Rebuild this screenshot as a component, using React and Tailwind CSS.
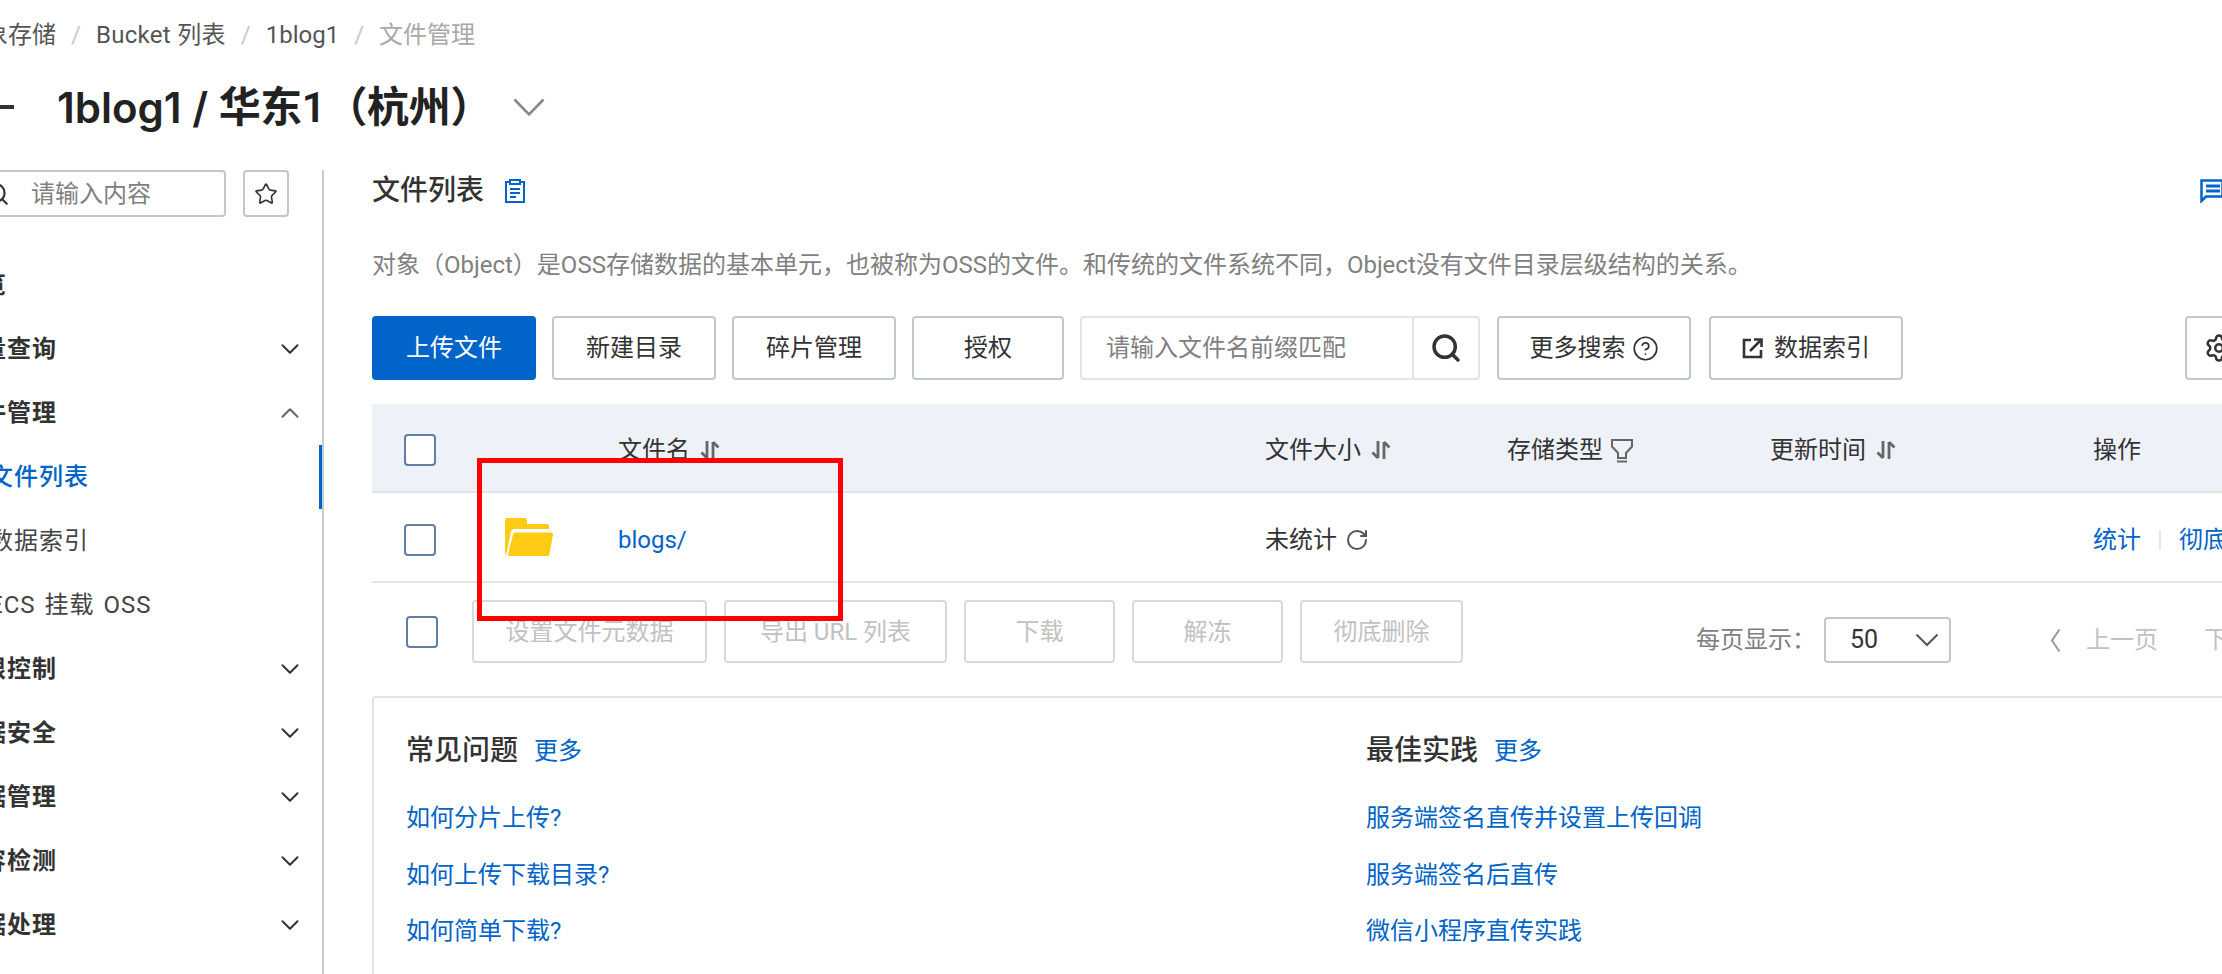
import React from "react";
import { ChevronDown, ChevronUp, Search, Star, CircleHelp, RotateCw, Settings } from "lucide-react";

const navAfter = ["权限控制", "数据安全", "数据管理", "内容检测", "数据处理"];

function SortIcon() {
  return (
    <svg width="20" height="20" viewBox="0 0 20 20" fill="none" className="ml-[10px] shrink-0">
      <path d="M7 1v17M7 18L1.5 12.5" stroke="#666" strokeWidth="2.8" />
      <path d="M13 19V2M13 2l5.5 5.5" stroke="#666" strokeWidth="2.8" />
    </svg>
  );
}

function FilterIcon() {
  return (
    <svg width="22" height="25" viewBox="0 0 22 25" fill="none" className="ml-[8px] shrink-0">
      <path d="M1 2h20v6.5l-6 6.5v5H7v-5L1 8.5z" stroke="#666" strokeWidth="2" />
      <path d="M6 23.5h10" stroke="#666" strokeWidth="2" />
    </svg>
  );
}

function Checkbox() {
  return <div className="w-8 h-8 rounded-[4px] border-2 border-[#5f7fa3] bg-white shrink-0" />;
}

function Btn({ w, children }) {
  return (
    <div className={`${w} h-16 shrink-0 flex items-center justify-center rounded-[4px] border-2 border-[#c0c6d2] bg-white text-[24px] text-[#333]`}>
      {children}
    </div>
  );
}

function GhostBtn({ w, children }) {
  return (
    <div className={`${w} h-[63px] shrink-0 flex items-center justify-center rounded-[4px] border-2 border-[#d6d9de] text-[24px] text-[#c1c1c1]`}>
      {children}
    </div>
  );
}

function NavTop({ label, open, plain }) {
  return (
    <div className="h-16 flex items-center justify-between pr-[17px] text-[24px] font-semibold tracking-[1px] text-[#333]">
      <span>{label}</span>
      {plain ? null : open ? (
        <ChevronUp size={30} strokeWidth={1.6} className="text-[#666]" />
      ) : (
        <ChevronDown size={30} strokeWidth={1.6} className="text-[#333]" />
      )}
    </div>
  );
}

function NavSub({ label, active }) {
  return (
    <div className={`h-16 flex items-center pl-8 text-[24px] tracking-[1px] [word-spacing:2px] relative ${active ? "text-[#0064c8] font-medium" : "text-[#444]"}`}>
      {label}
      {active && <div className="absolute right-0 top-0 w-[3px] h-16 bg-[#0064c8]" />}
    </div>
  );
}

export default function App() {
  return (
    <div className="w-full h-[974px] overflow-hidden bg-white font-['Roboto','Noto_Sans_CJK_SC',sans-serif] text-[#333]">
      <div className="w-[2400px] -ml-[72px]">
        {/* Breadcrumb */}
        <div className="h-[70px] flex items-center text-[24px] text-[#555] pl-[32px]">
          <span>对象存储</span>
          <span className="mx-[15px] text-[#c9c9c9]">/</span>
          <span className="tracking-[0.3px]">Bucket 列表</span>
          <span className="mx-[15px] text-[#c9c9c9]">/</span>
          <span>1blog1</span>
          <span className="mx-[15px] text-[#c9c9c9]">/</span>
          <span className="text-[#a8a8a8]">文件管理</span>
        </div>

        {/* Title */}
        <div className="h-[100px] flex items-center pb-[26px]">
          <div className="w-[129px] flex justify-end pr-[43px] shrink-0">
            <div className="w-[16px] h-[4px] bg-[#333]" />
          </div>
          <span className="font-['Inter'] text-[42px] font-semibold text-[#222] whitespace-pre">1blog1 / </span>
          <span className="text-[42px] font-semibold text-[#222] tracking-[-0.4px]">华东1（杭州）</span>
          <svg width="32" height="19" viewBox="0 0 32 19" fill="none" className="ml-[21px]">
            <path d="M1.5 1.5L16 16.5 30.5 1.5" stroke="#888" strokeWidth="2.6" />
          </svg>
        </div>

        <div className="flex">
          {/* Sidebar */}
          <div className="w-[396px] shrink-0 h-[804px] border-r-2 border-r-[#c6cad3]">
            <div className="flex gap-[17px] pl-[32px] pr-[33px] h-[47px]">
              <div className="flex-1 border-2 border-[#c0c6d2] rounded-[4px] flex items-center pl-[22px] text-[24px] text-[#808080]">
                <Search size={26} strokeWidth={2} className="text-[#333] mr-[21px] shrink-0" />
                请输入内容
              </div>
              <div className="w-[46px] border-2 border-[#c0c6d2] rounded-[4px] flex items-center justify-center">
                <Star size={24} strokeWidth={1.6} className="text-[#333]" />
              </div>
            </div>
            <div className="mt-[36px] pl-[29px]">
              <NavTop label="概览" plain />
              <NavTop label="用量查询" />
              <NavTop label="文件管理" open />
              <NavSub label="文件列表" active />
              <NavSub label="数据索引" />
              <NavSub label="ECS 挂载 OSS" />
              {navAfter.map((label) => (
                <NavTop key={label} label={label} />
              ))}
            </div>
          </div>

          {/* Main */}
          <div className="w-[1960px] pl-[48px] shrink-0">
            <div className="h-[42px] flex items-center justify-between">
              <div className="flex items-center">
                <span className="text-[28px] font-medium text-[#333]">文件列表</span>
                <svg width="22" height="24" viewBox="0 0 22 24" fill="none" className="ml-[20px]">
                  <path d="M6 3H2v20h18V3h-4" stroke="#0064c8" strokeWidth="2" />
                  <rect x="6" y="1" width="10" height="4" stroke="#0064c8" strokeWidth="2" />
                  <path d="M6 10h10M6 14h10M6 18h6" stroke="#0064c8" strokeWidth="2" />
                </svg>
              </div>
              <svg width="24" height="24" viewBox="0 0 24 24" fill="none" className="mr-[60px]">
                <path d="M1.5 1.5h21v16H6L1.5 22z" stroke="#0064c8" strokeWidth="2.5" />
                <path d="M6 7h14M6 12h14" stroke="#0064c8" strokeWidth="3" />
              </svg>
            </div>

            <div className="mt-[33px] h-[40px] flex items-center text-[24px] text-[#808080] whitespace-nowrap">
              对象（Object）是OSS存储数据的基本单元，也被称为OSS的文件。和传统的文件系统不同，Object没有文件目录层级结构的关系。
            </div>

            {/* Toolbar */}
            <div className="mt-[31px] flex items-center">
              <div className="w-[164px] h-16 shrink-0 rounded-[4px] bg-[#0064c8] text-white text-[24px] flex items-center justify-center">上传文件</div>
              <div className="ml-4 flex gap-4">
                <Btn w="w-[164px]">新建目录</Btn>
                <Btn w="w-[164px]">碎片管理</Btn>
                <Btn w="w-[152px]">授权</Btn>
              </div>
              <div className="ml-4 w-[400px] h-16 shrink-0 rounded-[4px] border-2 border-[#e3e4e6] flex items-center">
                <span className="flex-1 pl-[24px] text-[24px] text-[#808080]">请输入文件名前缀匹配</span>
                <div className="w-[66px] h-full border-l-2 border-l-[#e3e4e6] flex items-center justify-center">
                  <Search size={32} strokeWidth={2.6} className="text-[#333]" />
                </div>
              </div>
              <div className="ml-[17px] flex gap-[18px]">
                <Btn w="w-[194px]">
                  更多搜索
                  <CircleHelp size={27} strokeWidth={1.5} className="ml-[6px]" />
                </Btn>
                <Btn w="w-[194px]">
                  <svg width="22" height="22" viewBox="0 0 22 22" fill="none" className="mr-[10px]">
                    <path d="M9 3H2v17h17v-7" stroke="#333" strokeWidth="2.6" />
                    <path d="M8 14l10-10M12 2.5h7.5V10" stroke="#333" strokeWidth="2.6" />
                  </svg>
                  数据索引
                </Btn>
              </div>
              <div className="ml-[282px] w-[120px] h-16 shrink-0 rounded-[4px] border-2 border-[#c0c6d2] flex items-center pl-[17px]">
                <Settings size={30} strokeWidth={2} className="text-[#333]" />
              </div>
            </div>

            {/* Table */}
            <div className="mt-6 grid grid-cols-[133px_113px_647px_242px_263px_323px_1fr] h-[89px] pt-[5px] items-center bg-[#eef1f8] border-b-2 border-b-[#e3e4e6] text-[24px] text-[#333]">
              <div className="pl-8"><Checkbox /></div>
              <div />
              <div className="flex items-center">文件名<SortIcon /></div>
              <div className="flex items-center">文件大小<SortIcon /></div>
              <div className="flex items-center">存储类型<FilterIcon /></div>
              <div className="flex items-center">更新时间<SortIcon /></div>
              <div>操作</div>
            </div>
            <div className="grid grid-cols-[133px_113px_647px_242px_263px_323px_1fr] h-[90px] pt-[6px] items-center border-b-2 border-b-[#e3e4e6] text-[24px]">
              <div className="pl-8"><Checkbox /></div>
              <div className="-mt-[6px]">
                <svg width="48" height="38" viewBox="0 0 48 38" fill="none" className="block">
                  <path d="M2 0h17a3 3 0 0 1 3 3v3h20a2 2 0 0 1 2 2v3H9a3 3 0 0 0-3 2.5L1 38 0 34V2a2 2 0 0 1 2-2z" fill="#fecb14" />
                  <path d="M10.5 14.5H46a2 2 0 0 1 2 2.3L44.5 36a2 2 0 0 1-2 2H4.5a1.5 1.5 0 0 1-1.5-1.5L8 16.5a3 3 0 0 1 2.5-2z" fill="#fecb14" />
                </svg>
              </div>
              <div className="text-[#0064c8]">blogs/</div>
              <div className="flex items-center">
                未统计
                <RotateCw size={24} strokeWidth={2} className="ml-[8px] text-[#555]" />
              </div>
              <div />
              <div />
              <div className="flex items-center text-[#0064c8]">
                统计
                <span className="mx-[18px] w-[2px] h-[20px] bg-[#e3e4e6]" />
                彻底删除
              </div>
            </div>

            {/* Table footer */}
            <div className="mt-[17px] flex items-start">
              <div className="h-[63px] flex items-center pl-[34px] w-[100px] shrink-0"><Checkbox /></div>
              <div className="flex gap-[17px]">
                <GhostBtn w="w-[235px]">设置文件元数据</GhostBtn>
                <GhostBtn w="w-[223px]">导出 URL 列表</GhostBtn>
                <GhostBtn w="w-[151px]">下载</GhostBtn>
                <GhostBtn w="w-[151px]">解冻</GhostBtn>
                <GhostBtn w="w-[163px]">彻底删除</GhostBtn>
              </div>
              <div className="ml-[233px] mt-[17px] h-[46px] flex items-center text-[24px] text-[#808080] shrink-0">
                <span className="w-[128px]">每页显示：</span>
                <div className="w-[127px] h-[46px] border-2 border-[#c0c6d2] rounded-[4px] flex items-center justify-between pl-[24px] pr-[10px] text-[#333]">
                  <span className="text-[25px]">50</span>
                  <svg width="24" height="14" viewBox="0 0 24 14" fill="none">
                    <path d="M1.5 1.5L12 12 22.5 1.5" stroke="#555" strokeWidth="2" />
                  </svg>
                </div>
                <svg width="11" height="25" viewBox="0 0 11 25" fill="none" className="ml-[99px]">
                  <path d="M9.5 1.5L2 12.5l7.5 11" stroke="#999" strokeWidth="2" />
                </svg>
                <span className="ml-[25px] text-[#c1c1c1]">上一页</span>
                <span className="ml-[46px] text-[#c1c1c1]">下一页</span>
              </div>
            </div>

            {/* Help card */}
            <div className="mt-[33px] h-[320px] border-2 border-[#e3e4e6] rounded-[4px] flex pl-[32px]">
              <div className="w-[960px] shrink-0">
                <div className="mt-[33px] h-[40px] flex items-center">
                  <span className="text-[28px] font-medium text-[#333]">常见问题</span>
                  <span className="ml-[16px] text-[24px] text-[#0064c8]">更多</span>
                </div>
                <div className="mt-[27px] flex flex-col gap-[16.5px] text-[24px] text-[#0064c8] leading-[40px]">
                  <span>如何分片上传?</span>
                  <span>如何上传下载目录?</span>
                  <span>如何简单下载?</span>
                </div>
              </div>
              <div>
                <div className="mt-[33px] h-[40px] flex items-center">
                  <span className="text-[28px] font-medium text-[#333]">最佳实践</span>
                  <span className="ml-[16px] text-[24px] text-[#0064c8]">更多</span>
                </div>
                <div className="mt-[27px] flex flex-col gap-[16.5px] text-[24px] text-[#0064c8] leading-[40px]">
                  <span>服务端签名直传并设置上传回调</span>
                  <span>服务端签名后直传</span>
                  <span>微信小程序直传实践</span>
                </div>
              </div>
            </div>
          </div>
        </div>
      </div>

      {/* Red annotation drawn over the screenshot */}
      <div className="absolute left-[477px] top-[458px] w-[366px] h-[163px] border-[5px] border-[#ff0000] pointer-events-none" />
    </div>
  );
}
